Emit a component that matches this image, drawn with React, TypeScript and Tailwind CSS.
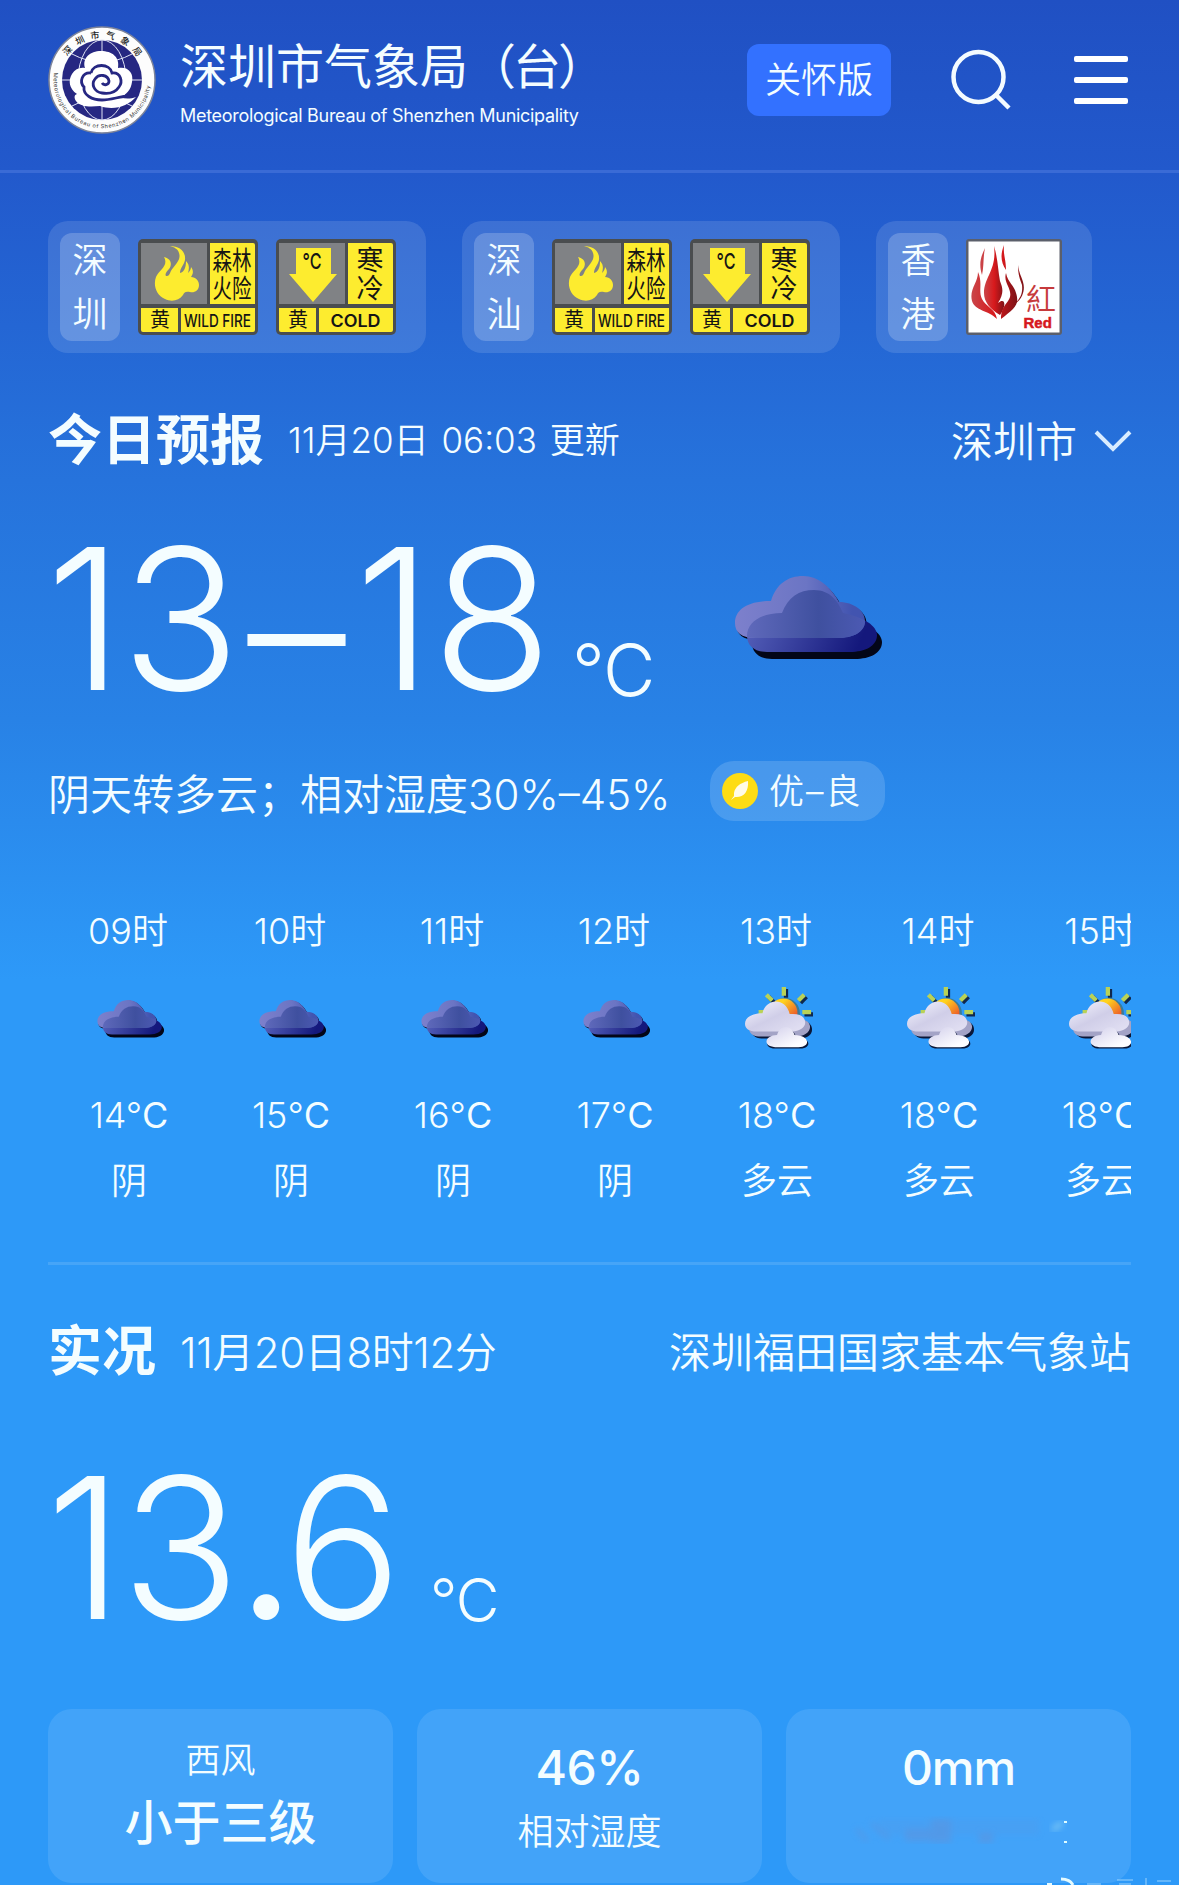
import type { ReactNode } from "react";

const regions = [
  { chars: ["深", "圳"], alerts: ["fire", "cold"] },
  { chars: ["深", "汕"], alerts: ["fire", "cold"] },
  { chars: ["香", "港"], alerts: ["hkRed"] },
];

const hours = [
  { time: "09时", icon: "overcast", temp: "14", text: "阴" },
  { time: "10时", icon: "overcast", temp: "15", text: "阴" },
  { time: "11时", icon: "overcast", temp: "16", text: "阴" },
  { time: "12时", icon: "overcast", temp: "17", text: "阴" },
  { time: "13时", icon: "cloudy", temp: "18", text: "多云" },
  { time: "14时", icon: "cloudy", temp: "18", text: "多云" },
  { time: "15时", icon: "cloudy", temp: "18", text: "多云" },
];

const Logo = () => (
  <svg className="h-[108px] w-[108px]" viewBox="0 0 108 108">
    <defs>
      <path id="ringTop" d="M12 54a42 42 0 0 1 84 0" />
      <path id="ringBottom" d="M6.200 45.600A48.500 48.500 0 1 0 101.800 45.600" />
    </defs>
    <circle cx="54" cy="54" r="53" fill="#fdfdfd" stroke="#7d8499" strokeWidth="1.5" />
    <circle cx="54" cy="54" r="40" fill="#262782" />
    <g fill="none" stroke="#dfe3f5" strokeWidth="1">
      <ellipse cx="54" cy="54" rx="24" ry="40" />
      <path d="M54 14v80M14 54h80M24 28q30 16 60 0M24 80q30-16 60 0" />
    </g>
    <path
      d="M37 42C34 32 42 25 53 25S72 31 70 42C80 40 86 47 84 56 83 64 78 69 72 71 77 73 82 73 88 71 80 80 66 85 52 80 42 81 32 81 28 75 26 72 26 69 29 68 21 63 20 54 24 48 27 43 32 41 37 42z"
      fill="#fff"
    />
    <path
      d="M43 47C45 37 62 37 64 47 73 46 75 56 71 61 67 67 60 68 54 67 46 66 43 58 47 53 51 47 60 49 61 55 61 59 56 60 54 57M43 47C34 46 31 56 36 61 35 69 44 74 54 74 64 74 72 70 82 70"
      fill="none"
      stroke="#262782"
      strokeWidth="2.800"
    />
    <text fontSize="9" fill="#222" letterSpacing="5.700" className="font-medium">
      <textPath href="#ringTop" startOffset="25">
        深圳市气象局
      </textPath>
    </text>
    <text fontSize="5.600" fill="#333" letterSpacing=".55">
      <textPath href="#ringBottom" startOffset="1">
        Meteorological Bureau of Shenzhen Municipality
      </textPath>
    </text>
  </svg>
);

const WarningFrame = ({ art, title, level }: { art: ReactNode; title: ReactNode; level: ReactNode }) => (
  <svg className="h-24 w-[120px]" viewBox="0 0 120 96">
    <rect width="120" height="96" rx="5" fill="#4a4d4f" />
    <rect x="3" y="4" width="66" height="61" fill="#808285" />
    {art}
    <path d="M72 4h43q2 0 2 2v59h-45zM3 69h37v24h-35q-2 0-2-2zM43 69h74v22q0 2-2 2h-72z" fill="#fdec2f" />
    <g fill="#151515" textAnchor="middle">
      {title}
      <text x="22" y="88" fontSize="20">
        黄
      </text>
      {level}
    </g>
  </svg>
);

const FireWarning = () => (
  <WarningFrame
    art={
      <path
        d="M32 7c9 0 16 5 15 14-1 5-5 8-5 13 4-1 6-5 6-12 4 4 3 8 2 12 2-2 3-4 3-6 3 4 2 7 0 10 5 0 8 4 8 8 0 6-5 8-9 7-5-1-6 1-7 3-4 6-12 7-18 4C18 56 15 46 18 38 21 31 31 27 26 18 34 20 34 26 31 30 28 33 26 37 29 37 32 37 32 32 35 29 39 24 43 20 41 14 40 10 36 8 32 7z"
        fill="#fdec2f"
      />
    }
    title={
      <g transform="scale(.75 1)">
        <text x="125.300" y="31" fontSize="26">
          森林
        </text>
        <text x="125.300" y="59" fontSize="26">
          火险
        </text>
      </g>
    }
    level={
      <text x="79.500" y="87.500" fontSize="17" textLength="67" lengthAdjust="spacingAndGlyphs" className="font-medium">
        WILD FIRE
      </text>
    }
  />
);

const ColdWarning = () => (
  <WarningFrame
    art={
      <>
        <path d="M20 9h35v26h6l-24 28-24-28h7z" fill="#fdec2f" />
        <text x="36" y="30" fontSize="22" textAnchor="middle" fill="#151515" textLength="19" lengthAdjust="spacingAndGlyphs" className="font-medium">
          °C
        </text>
      </>
    }
    title={
      <>
        <text x="94" y="31" fontSize="27">
          寒
        </text>
        <text x="94" y="59" fontSize="27">
          冷
        </text>
      </>
    }
    level={
      <text x="79.500" y="88" fontSize="17" textLength="50" lengthAdjust="spacingAndGlyphs" className="font-semibold">
        COLD
      </text>
    }
  />
);

const HkRedWarning = () => (
  <svg className="h-24 w-24" viewBox="0 0 96 96">
    <defs>
      <linearGradient id="flame" x1="0" y1="0" x2="1" y2="0">
        <stop offset="0" stopColor="#c9464a" />
        <stop offset=".5" stopColor="#d8191c" />
        <stop offset="1" stopColor="#7d1217" />
      </linearGradient>
    </defs>
    <rect width="96" height="96" rx="3" fill="#5b5f6b" />
    <rect x="2.500" y="2.500" width="91" height="91" fill="#fff" />
    <g fill="url(#flame)">
      <path d="M28 7C32 20 32 32 34 42 37 50 38 54 32 64 39 58 41 66 34 76 24 70 18 63 18 54 18 38 31 31 28 7z" />
      <path d="M19 9C14 19 13 26 16 36 18 28 17 18 19 9zM38 6C34 16 35 24 40 31 40 20 37 16 38 6zM52 26C52 36 54 40 56 46 57 55 54 59 49 65 58 59 59 49 57 43 55 36 53 34 52 26z" />
      <path d="M12 33C12 44 3 50 6 62 9 72 22 71 31 80 29 69 20 68 16 60 12 52 17 44 12 33zM40 34C37 44 46 49 44 58 41 66 35 67 35 80 48 70 54 66 50 54 48 46 42 44 40 34z" />
    </g>
    <text x="60" y="71" fontSize="30" fill="#c63a3c" className="font-[350]">
      紅
    </text>
    <text x="57.500" y="89" fontSize="15" fill="#d6181e" stroke="#d6181e" strokeWidth=".5" className="font-['Liberation_Sans',sans-serif] font-bold">
      Red
    </text>
  </svg>
);

const alertIcons: Record<string, ReactNode> = {
  fire: <FireWarning />,
  cold: <ColdWarning />,
  hkRed: <HkRedWarning />,
};

const backCloud =
  "M22 63C7 63 1 57 1 48 1 35 13 26 37 26 42 9 54 1 69 1 85 1 97 13 105 27 120 27 131 36 131 46 131 57 119 63 104 63z";
const frontCloud =
  "M33 77C20 77 13 70 13 61 13 47 27 38 48 38 54 22 65 15 80 15 96 15 104 26 109 38 130 42 143 51 143 60 143 71 131 77 116 77z";

const Overcast = ({ className }: { className?: string }) => (
  <svg className={className} viewBox="0 0 150 86">
    <defs>
      <linearGradient id="cloudBack" x1="0" y1="0" x2="1" y2="0">
        <stop offset="0" stopColor="#7d80cc" />
        <stop offset=".55" stopColor="#6b75c4" />
        <stop offset=".9" stopColor="#4254b0" />
      </linearGradient>
      <linearGradient id="cloudFront" x1="0" y1="0" x2="1" y2=".2">
        <stop offset="0" stopColor="#5c68c0" />
        <stop offset="1" stopColor="#14187c" />
      </linearGradient>
      <linearGradient id="cloudMix" x1="0" y1="0" x2="1" y2="0">
        <stop offset="0" stopColor="#5f69bb" />
        <stop offset=".55" stopColor="#3f509f" />
        <stop offset="1" stopColor="#4f5cb8" />
      </linearGradient>
      <clipPath id="backShape">
        <path d={backCloud} />
      </clipPath>
    </defs>
    <path d={backCloud} fill="#030618" transform="translate(1.500 2)" />
    <path d={frontCloud} fill="#030618" transform="translate(5 7)" />
    <path d={frontCloud} fill="url(#cloudFront)" />
    <path d={backCloud} fill="url(#cloudBack)" />
    <path d={frontCloud} fill="url(#cloudMix)" clipPath="url(#backShape)" />
  </svg>
);

const Cloudy = ({ className }: { className?: string }) => (
  <svg className={className} viewBox="0 0 70 66">
    <defs>
      <linearGradient id="sun" x1="0" y1="0" x2="1" y2="1">
        <stop offset=".3" stopColor="#ffd21e" />
        <stop offset=".85" stopColor="#e8452c" />
      </linearGradient>
      <linearGradient id="whiteCloud" x1="0" y1="0" x2="1" y2="1">
        <stop offset="0" stopColor="#f6f6ff" />
        <stop offset=".5" stopColor="#d0cee8" />
        <stop offset="1" stopColor="#e4e2f4" />
      </linearGradient>
      <linearGradient id="smallCloud" x1="0" y1="0" x2="1" y2="1">
        <stop offset=".2" stopColor="#dcdaf0" />
        <stop offset=".8" stopColor="#fdfdff" />
      </linearGradient>
    </defs>
    <g strokeWidth="4.400">
      <path d="M41 2v9M23 10l6 6M62 10l-6 6M15 28h7M60 28h9" stroke="#10284e" transform="translate(1.200 1.200)" />
      <path d="M40 1v9M22 9l6 6M61 9l-6 6M14 27h7M59 27h9" stroke="#b9d257" />
    </g>
    <circle cx="41" cy="28" r="15.500" fill="#3c7c95" />
    <circle cx="39.500" cy="27.500" r="14.500" fill="url(#sun)" />
    <path d="M17 54C10 54 6 49 6 44L62 36C67 38 69 41 69 45 69 51 63 54 56 54z" fill="#0a1738" />
    <path d="M14 52C8 52 4 48 4 43c0-6 8-9 15-9 4-10 20-12 26 0 12-2 22 1 22 8 0 6-7 10-14 10z" fill="#a3a3c6" />
    <path d="M12 47C4 47 0 44 0 39c0-7 8-11 18-11 4-16 24-16 28 1 11-1 16 3 16 9 0 5-7 9-13 9z" fill="url(#whiteCloud)" />
    <path d="M31 64.500C19 64 21 54 34 53c3-12 15-12 19 0 15 0 16 11 4 11.500z" fill="#0a1738" />
    <path d="M31 63C18 62 20 51 33 50.500c3-11 15-11 18 0 16 .5 17 12.500 4 12.500z" fill="url(#smallCloud)" />
  </svg>
);

const Header = () => (
  <header className="flex h-[173px] items-start border-b-[3px] border-[#3a6bd6] pr-[51px] pl-12">
    <div className="mt-[26px]">
      <Logo />
    </div>
    <div className="ml-6 pt-[31px]">
      <h1 className="h-[71px] w-[420px] text-5xl leading-[72px] whitespace-nowrap">
        深圳市气象局<span className="tracking-[-3px]">（台</span>）
      </h1>
      <p className="text-[18px] leading-[28px] tracking-[-0.3px] whitespace-nowrap">
        Meteorological Bureau of Shenzhen Municipality
      </p>
    </div>
    <div className="mt-11 ml-auto flex h-[72px] items-center">
      <button className="h-[72px] w-36 rounded-xl bg-[#3371ff] text-4xl font-[350]">关怀版</button>
      <svg className="ml-[58px] h-[64px] w-[64px]" viewBox="0 0 64 64" fill="none" stroke="#f4fbff" strokeWidth="4.500">
        <circle cx="29.500" cy="29" r="25" />
        <path d="M47 47l13 13" />
      </svg>
      <div className="ml-[61px] flex w-[54px] flex-col gap-[15px]">
        <span className="h-1.5 rounded-xs bg-white" />
        <span className="h-1.5 rounded-xs bg-white" />
        <span className="h-1.5 rounded-xs bg-white" />
      </div>
    </div>
  </header>
);

const StatCard = ({ children }: { children: ReactNode }) => (
  <div className="flex h-[174px] flex-1 flex-col items-center rounded-3xl bg-white/10">{children}</div>
);

const App = () => {
  return (
    <div className="relative h-[1885px] w-[1179px] overflow-hidden bg-[linear-gradient(180deg,#2050c3_0px,#2259cc_172px,#2673dc_480px,#2882e6_720px,#2d99f8_980px)] font-['Inter','Noto_Sans_CJK_SC',sans-serif] text-[#f4fdff]">
      <Header />

      {/* Warning signals */}
      <section className="mt-12 flex gap-9 px-12">
        {regions.map((region, index) => (
          <div key={index} className="flex h-[132px] items-center gap-[18px] rounded-[20px] bg-white/12 pr-[30px] pl-3">
            <div className="flex h-[108px] w-[60px] flex-col items-center rounded-xl bg-white/20 text-[35px] leading-[54px] font-[350]">
              {region.chars.map((char) => (
                <span key={char}>{char}</span>
              ))}
            </div>
            {region.alerts.map((alert) => (
              <div key={alert}>{alertIcons[alert]}</div>
            ))}
          </div>
        ))}
      </section>

      {/* Today */}
      <section className="px-12">
        <div className="mt-[52px] flex h-[72px] items-center">
          <h2 className="text-[54px] leading-[72px] font-bold">今日预报</h2>
          <span className="ml-6 pb-0.5 text-[35px] font-[350] [word-spacing:3px]">11月20日 06:03 更新</span>
          <div className="-mr-px ml-auto flex items-center text-[42px] font-[350]">
            深圳市
            <svg className="ml-[17px] h-6 w-[38px]" viewBox="0 0 38 24" fill="none" stroke="#d9ecff" strokeWidth="4">
              <path d="M2 3l17 17 17-17" />
            </svg>
          </div>
        </div>

        <div className="mt-[42px] flex h-[200px] items-start">
          <div className="-ml-[2px] flex w-[526px] text-[196px] leading-[200px] font-light">
            <span className="w-[192px] tracking-[-2px]">13</span>
            <span className="w-[117px] pt-[11px] text-center">–</span>
            <span>18</span>
          </div>
          <div className="w-[162px] pt-[115px] text-[72px] leading-[72px] font-[350] tracking-[-1px]">°C</div>
          <Overcast className="mt-[56px] h-[86px] w-[150px]" />
        </div>

        <div className="mt-[42px] flex h-[60px] items-center">
          <span className="w-[662px] pt-1.5 text-[42px] font-[350] whitespace-nowrap">阴天转多云；相对湿度30%–45%</span>
          <div className="flex h-[60px] w-[175px] items-center rounded-3xl bg-white/15 pl-3">
            <svg className="h-9 w-9" viewBox="0 0 36 36">
              <circle cx="18" cy="18" r="18" fill="#fddc14" />
              <path d="M26 8c-8 2-13 6-14 12l0 3-3 4 4-3c8 1 14-5 13-16z" fill="#fffbe6" />
            </svg>
            <span className="ml-[11px] text-[35px] font-[350] tracking-[2px]">优–良</span>
          </div>
        </div>
      </section>

      {/* Hourly */}
      <section className="mx-12 mt-[77px] flex overflow-hidden border-b-[3px] border-white/12 pb-12">
        {hours.map((hour) => (
          <div key={hour.time} className="flex w-[162px] shrink-0 flex-col items-center text-4xl font-[350]">
            <span className="-ml-0.5 leading-[66px]">{hour.time}</span>
            <div className="flex h-[118px] w-[72px] items-center justify-center pb-2.5">
              {hour.icon === "overcast" ? (
                <Overcast className="mt-0.5 ml-1 h-10 w-[70px]" />
              ) : (
                <Cloudy className="ml-1 h-[66px] w-[70px]" />
              )}
            </div>
            <span className="leading-[66px]">
              {hour.temp}°<span className="font-normal">C</span>
            </span>
            <span className="leading-[66px]">{hour.text}</span>
          </div>
        ))}
      </section>

      {/* Observation */}
      <section className="px-12">
        <div className="mt-[51px] flex h-[72px] items-center text-[42px] font-[350]">
          <h2 className="text-[54px] leading-[72px] font-bold">实况</h2>
          <span className="ml-6 tracking-[-0.4px]">11月20日8时12分</span>
          <span className="ml-auto">深圳福田国家基本气象站</span>
        </div>
        <div className="mt-[60px] flex h-[200px] items-start">
          <div className="-ml-[2px] flex w-[384px] text-[196px] leading-[200px] font-light">
            <span className="w-[192px] tracking-[-2px]">13</span>
            <span className="w-[46px] text-center font-normal">.</span>
            <span>6</span>
          </div>
          <div className="pt-[122px] text-[60px] leading-[60px] font-[350] tracking-[-1px]">°C</div>
        </div>
        <div className="mt-[61px] flex gap-6">
          <StatCard>
            <span className="mt-[24px] text-[35px] leading-[54px] font-[350]">西风</span>
            <span className="text-5xl leading-[71px] font-medium">小于三级</span>
          </StatCard>
          <StatCard>
            <span className="mt-[24px] text-5xl leading-[70px] font-medium tracking-[-0.5px]">46%</span>
            <span className="mt-0.5 text-4xl leading-[54px] font-[350]">相对湿度</span>
          </StatCard>
          <StatCard>
            <span className="mt-[24px] text-5xl leading-[70px] font-medium tracking-[-1px]">0mm</span>
            {/* smudged caption */}
            <svg className="mt-2 h-[36px] w-[220px]" viewBox="0 0 220 36">
              <defs>
                <filter id="smudge">
                  <feGaussianBlur stdDeviation="3" />
                </filter>
              </defs>
              <g filter="url(#smudge)" fill="#5f93dc" opacity=".55">
                <path d="M8 18l10 12M22 12l18 16M58 20h24v8h-24zM84 10h16v20h-16zM132 24h10v6h-10z" stroke="#5f93dc" strokeWidth="4" />
                <path d="M30 8h160v16H30z" opacity=".3" />
              </g>
              <path d="M216 10q-12 2-14 10 8 0 14-10z" fill="#7cc8f4" filter="url(#smudge)" />
              <path d="M215 10h3v2h-3zM215 30h3v2h-3z" fill="#dffcff" />
            </svg>
          </StatCard>
        </div>
      </section>

      {/* Watermark */}
      <svg className="absolute right-0 bottom-0 h-2 w-[140px]" viewBox="0 0 140 8" fill="none" stroke="#e6fbff" strokeWidth="2">
        <path d="M22 2q9 0 12 6" strokeWidth="3" />
        <path d="M8 7h5" />
        <path d="M48 7h14M78 3h16M80 7h12M107 1v7M118 4h14" strokeWidth="1.500" opacity=".4" />
      </svg>
    </div>
  );
};

export default App;
